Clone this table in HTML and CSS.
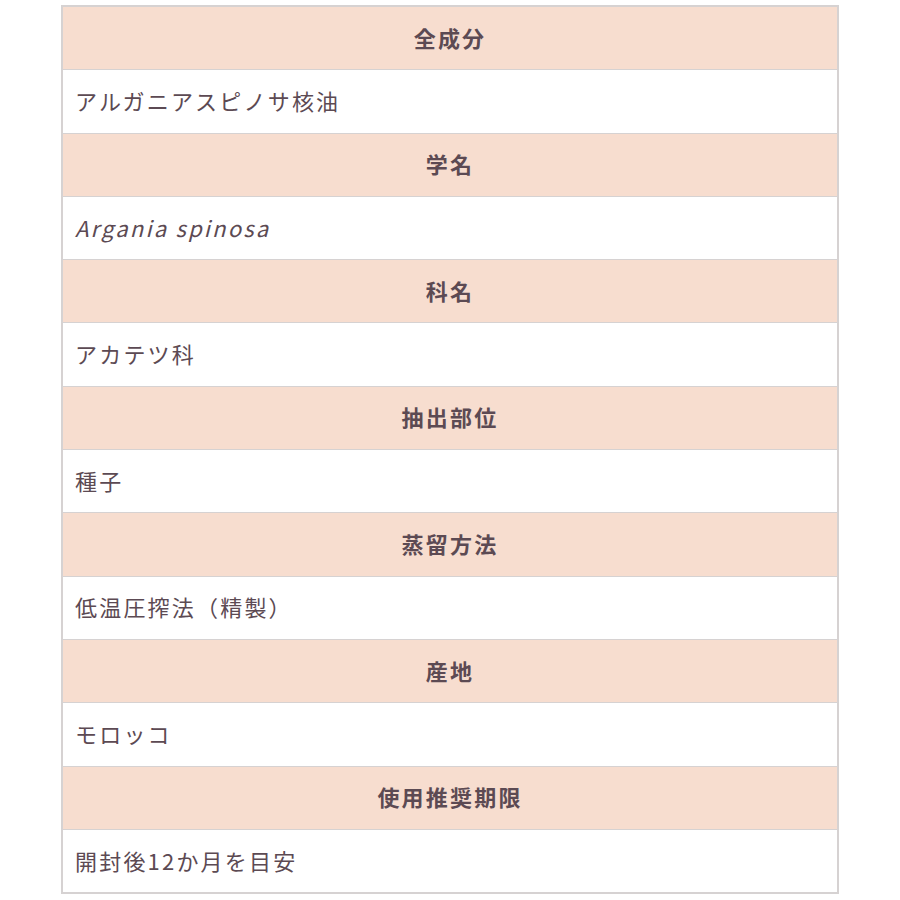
FILE: index.html
```html
<!DOCTYPE html>
<html lang="ja">
<head>
<meta charset="utf-8">
<link rel="stylesheet" href="styles.css">
</head>
<body>
<div class="spec">
  <div class="row head">全成分</div>
  <div class="row">アルガニアスピノサ核油</div>
  <div class="row head">学名</div>
  <div class="row"><em class="latin">Argania spinosa</em></div>
  <div class="row head">科名</div>
  <div class="row">アカテツ科</div>
  <div class="row head">抽出部位</div>
  <div class="row">種子</div>
  <div class="row head">蒸留方法</div>
  <div class="row">低温圧搾法（精製）</div>
  <div class="row head">産地</div>
  <div class="row">モロッコ</div>
  <div class="row head">使用推奨期限</div>
  <div class="row">開封後12か月を目安</div>
</div>
</body>
</html>
```
FILE: styles.css
```css
html, body {
  margin: 0;
  padding: 0;
  background: #ffffff;
}
body {
  font-family: "Noto Sans CJK JP", "Noto Sans", sans-serif;
  color: #5c4a53;
}
.spec {
  width: 778px;
  margin: 5px 0 0 61px;
  border: 2px solid #d6d2d2;
  border-bottom-width: 1px;
  box-sizing: border-box;
  display: flex;
  flex-direction: column;
}
.row {
  height: 63.3px;
  box-sizing: border-box;
  border-bottom: 1.5px solid #d6d2d2;
  display: flex;
  align-items: center;
  padding: 0 12px 3px;
  font-size: 22px;
  letter-spacing: 0.1em;
  background: #fff;
}
.row.head {
  background: #f7ddcf;
  justify-content: center;
  font-weight: 700;
}
.latin {
  font-style: italic;
  letter-spacing: 0.1em;
}
```
